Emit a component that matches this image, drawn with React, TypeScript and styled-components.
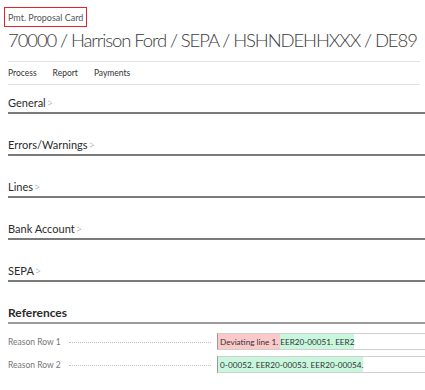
import React from 'react';
import styled, { createGlobalStyle } from 'styled-components';

const GlobalStyle = createGlobalStyle`
  html, body {
    margin: 0;
    padding: 0;
    background: #ffffff;
  }
  body {
    font-family: 'Segoe UI', Lato, 'Noto Sans', 'Liberation Sans', sans-serif;
    color: #333;
  }
`;

const Page = styled.div`
  width: 425px;
  height: 390px;
  overflow: hidden;
  padding: 7px 0 0 8px;
  box-sizing: border-box;
`;

const Caption = styled.div`
  display: flex;
  align-items: center;
  width: fit-content;
  box-sizing: border-box;
  height: 20px;
  margin-left: -4px;
  padding: 0 3px;
  border: 1.5px solid #e0262b;
  font-size: 9px;
  color: #555;
`;

const Title = styled.h1`
  margin: 0;
  font-size: 18.5px;
  font-weight: 300;
  line-height: 26px;
  letter-spacing: -1.1px;
  color: #3a3a3a;
  white-space: nowrap;
`;

const Divider = styled.div<{ gap?: number }>`
  height: 1px;
  background: #e3e3e3;
  margin-right: 5px;
  margin-top: ${p => p.gap ?? 0}px;
`;

const Menu = styled.nav`
  display: flex;
  gap: 16px;
  height: 22px;
  align-items: center;
  font-size: 8.5px;
  color: #333;
`;

const MenuItem = styled.span``;

const Sections = styled.div`
  margin-top: 7px;
  display: flex;
  flex-direction: column;
  gap: 20px;
`;

const Section = styled.div<{ big?: boolean }>`
  display: flex;
  align-items: center;
  height: 20px;
  border-bottom: 2px solid ${p => (p.big ? '#9a9a9a' : '#7a7a7a')};
  font-size: ${p => (p.big ? 12 : 11)}px;
  font-weight: ${p => (p.big ? 700 : 400)};
  color: #2b2b2b;
`;

const Chevron = styled.span`
  font-weight: 300;
  color: #999;
  margin-left: 1px;
  font-size: 11px;
`;

const Rows = styled.div`
  margin-top: 9px;
  display: flex;
  flex-direction: column;
  gap: 6px;
`;

const Row = styled.div`
  display: flex;
  align-items: center;
  height: 17px;
`;

const Label = styled.div`
  width: 209px;
  display: flex;
  align-items: center;
  font-size: 8.5px;
  color: #777;
  white-space: nowrap;
`;

const Leader = styled.span`
  flex: 1;
  margin: 2px 6px 0 8px;
  border-bottom: 1px dotted #c4c4c4;
`;

const Field = styled.div`
  flex: 1;
  height: 17px;
  box-sizing: border-box;
  border: 1px solid #cfcfcf;
  border-left: 1.5px solid #9a9a9a;
  border-right: none;
  display: flex;
  align-items: stretch;
  font-size: 8.2px;
  color: #333;
  white-space: nowrap;
  overflow: hidden;
`;

const Mark = styled.span<{ tone: 'red' | 'green' }>`
  display: flex;
  align-items: center;
  padding-left: ${p => (p.tone === 'red' ? 2 : 0)}px;
  background: ${p => (p.tone === 'red' ? '#fbc9c9' : '#c8f7de')};
`;

const reasons = [
  {
    label: 'Reason Row 1',
    parts: [
      { tone: 'red' as const, text: 'Deviating line 1.\u00a0' },
      { tone: 'green' as const, text: 'EER20-00051. EER2' },
    ],
  },
  {
    label: 'Reason Row 2',
    parts: [{ tone: 'green' as const, text: '\u00a00-00052. EER20-00053. EER20-00054.' }],
  },
];

const sections = ['General', 'Errors/Warnings', 'Lines', 'Bank Account', 'SEPA'];

export default function App() {
  return (
    <>
      <GlobalStyle />
      <Page>
        <Caption>Pmt. Proposal Card</Caption>
        <Title>70000 / Harrison Ford / SEPA / HSHNDEHHXXX / DE89</Title>
        <Divider gap={8} />
        <Menu>
          <MenuItem>Process</MenuItem>
          <MenuItem>Report</MenuItem>
          <MenuItem>Payments</MenuItem>
        </Menu>
        <Divider />
        <Sections>
          {sections.map(s => (
            <Section key={s}>
              {s}
              <Chevron>&gt;</Chevron>
            </Section>
          ))}
          <div>
            <Section big>References</Section>
            <Rows>
              {reasons.map(r => (
                <Row key={r.label}>
                  <Label>
                    {r.label}
                    <Leader />
                  </Label>
                  <Field>
                    {r.parts.map((p, i) => (
                      <Mark key={i} tone={p.tone}>
                        {p.text}
                      </Mark>
                    ))}
                  </Field>
                </Row>
              ))}
            </Rows>
          </div>
        </Sections>
      </Page>
    </>
  );
}
